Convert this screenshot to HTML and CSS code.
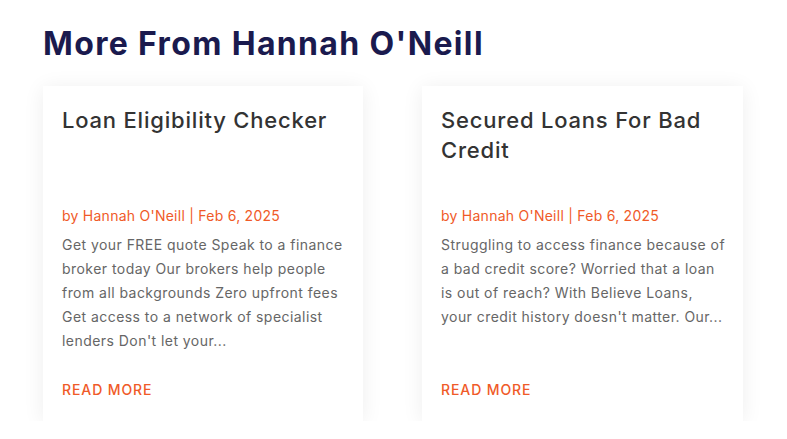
FILE: index.html
```html
<!DOCTYPE html>
<html lang="en">
<head>
<meta charset="utf-8">
<title>More From Hannah O'Neill</title>
<link rel="stylesheet" href="styles.css">
</head>
<body>
<section class="more">
  <h2 class="more-title">More From Hannah O'Neill</h2>
  <div class="cards">
    <article class="card">
      <h3 class="card-title">Loan Eligibility Checker</h3>
      <p class="card-meta">by Hannah O'Neill | Feb 6, 2025</p>
      <p class="card-excerpt">Get your FREE quote Speak to a finance broker today Our brokers help people from all backgrounds Zero upfront fees Get access to a network of specialist lenders Don't let your...</p>
      <a class="card-more" href="#">READ MORE</a>
    </article>
    <article class="card">
      <h3 class="card-title">Secured Loans For Bad Credit</h3>
      <p class="card-meta">by Hannah O'Neill | Feb 6, 2025</p>
      <p class="card-excerpt">Struggling to access finance because of a bad credit score? Worried that a loan is out of reach? With Believe Loans, your credit history doesn't matter. Our...</p>
      <a class="card-more" href="#">READ MORE</a>
    </article>
  </div>
</section>
</body>
</html>
```
FILE: styles.css
```css
* { box-sizing: border-box; }
html, body { margin: 0; padding: 0; background: #fff; }
body { font-family: Inter, "Open Sans", sans-serif; }

.more { padding: 22px 0 0 43px; }

.more-title {
  margin: 0;
  font-size: 32px;
  line-height: 44px;
  font-weight: 700;
  letter-spacing: 1.35px;
  color: #1a1a4e;
}

.cards {
  display: grid;
  grid-template-columns: 320px 321px;
  column-gap: 59px;
  margin-top: 20px;
}

.card {
  display: flex;
  flex-direction: column;
  background: #fff;
  padding: 19px 15px 19px 19px;
  box-shadow: 0 2px 20px rgba(0, 0, 0, 0.07);
}

.card-title {
  margin: 0;
  min-height: 60px;
  font-size: 22px;
  line-height: 30px;
  font-weight: 500;
  letter-spacing: 0.8px;
  color: #333;
}

.card-meta {
  margin: 39px 0 0;
  font-size: 14px;
  line-height: 24px;
  letter-spacing: 0.25px;
  color: #f05a28;
}

.card-excerpt {
  margin: 5px 0 0;
  font-size: 14px;
  line-height: 24px;
  letter-spacing: 0.45px;
  color: #666;
}

.card-more {
  margin-top: auto;
  padding-top: 25px;
  font-size: 14px;
  line-height: 24px;
  font-weight: 500;
  letter-spacing: 0.9px;
  color: #f05a28;
  text-decoration: none;
}
```
